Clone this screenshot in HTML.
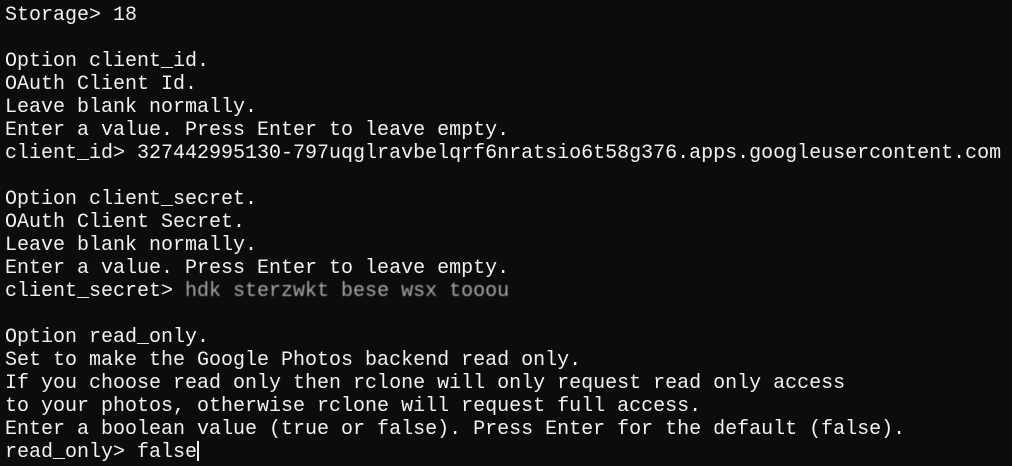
<!DOCTYPE html>
<html><head><style>
html,body{margin:0;padding:0;background:#0c0c0c;width:1012px;height:466px;overflow:hidden}
pre{margin:0;position:absolute;left:5px;top:4px;font-family:"Liberation Mono",monospace;font-size:20px;line-height:23px;color:#f2f2f2}
.s{color:#a8a8a8;filter:blur(0.4px)}
.c{display:inline-block;width:2px;height:20px;background:#f2f2f2;vertical-align:-4px}
</style></head><body>
<pre>Storage&gt; 18

Option client_id.
OAuth Client Id.
Leave blank normally.
Enter a value. Press Enter to leave empty.
client_id&gt; 327442995130-797uqglravbelqrf6nratsio6t58g376.apps.googleusercontent.com

Option client_secret.
OAuth Client Secret.
Leave blank normally.
Enter a value. Press Enter to leave empty.
client_secret&gt; <span class="s">hdk sterzwkt bese wsx tooou</span>

Option read_only.
Set to make the Google Photos backend read only.
If you choose read only then rclone will only request read only access
to your photos, otherwise rclone will request full access.
Enter a boolean value (true or false). Press Enter for the default (false).
read_only&gt; false<span class="c"></span></pre>
</body></html>
